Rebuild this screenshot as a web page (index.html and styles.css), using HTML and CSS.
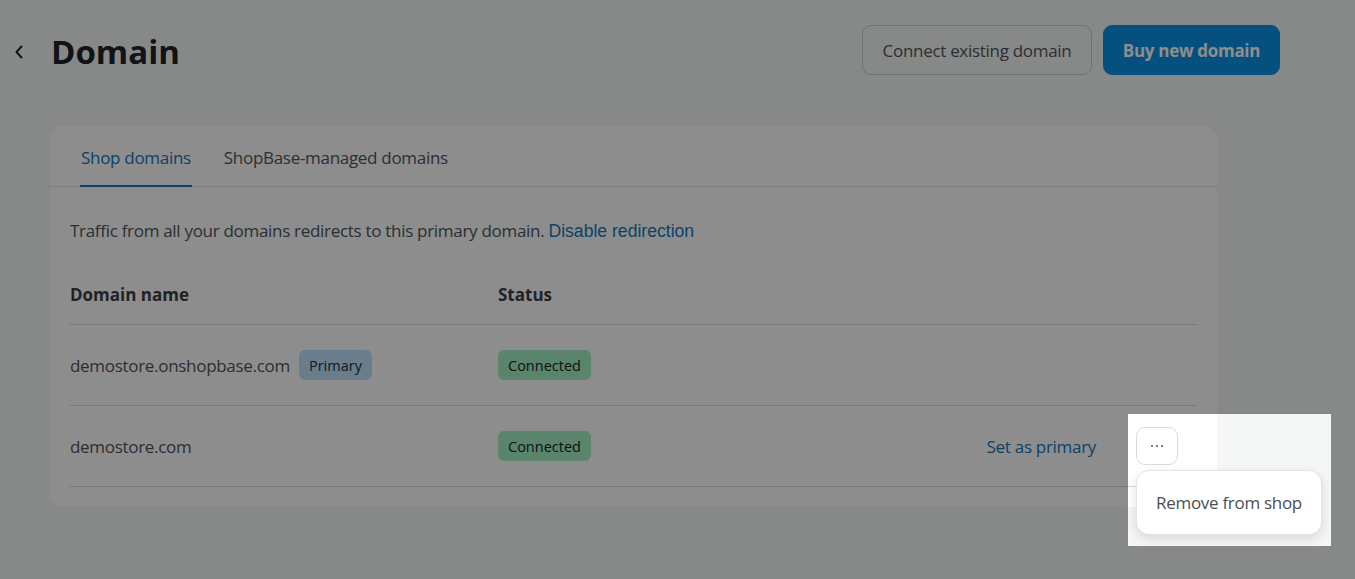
FILE: index.html
```html
<!DOCTYPE html>
<html lang="en">
<head>
<meta charset="utf-8">
<title>Domain</title>
<link rel="stylesheet" href="styles.css">
</head>
<body>
<div class="page">
  <header class="header">
    <div class="title-wrap">
      <span class="back">
        <svg width="10" height="14" viewBox="0 0 10 14"><path d="M7.5 1.5 L2.5 7 L7.5 12.5" fill="none" stroke="#23292f" stroke-width="2" stroke-linecap="round" stroke-linejoin="round"/></svg>
      </span>
      <h1 class="title">Domain</h1>
    </div>
    <div class="actions">
      <button class="btn btn-outline">Connect existing domain</button>
      <button class="btn btn-primary">Buy new domain</button>
    </div>
  </header>

  <section class="card">
    <nav class="tabs">
      <span class="tab active">Shop domains</span>
      <span class="tab">ShopBase-managed domains</span>
    </nav>
    <div class="card-body">
      <p class="note">Traffic from all your domains redirects to this primary domain. <a class="link-arial">Disable redirection</a></p>
      <div class="table">
        <div class="row head">
          <div class="col-name">Domain name</div>
          <div class="col-status">Status</div>
          <div class="col-actions"></div>
        </div>
        <div class="row">
          <div class="col-name">demostore.onshopbase.com <span class="badge badge-blue">Primary</span></div>
          <div class="col-status"><span class="badge badge-green">Connected</span></div>
          <div class="col-actions"></div>
        </div>
        <div class="row">
          <div class="col-name">demostore.com</div>
          <div class="col-status"><span class="badge badge-green">Connected</span></div>
          <div class="col-actions">
            <a class="link">Set as primary</a>
            <div class="more-wrap">
              <button class="more">
                <svg width="14" height="4" viewBox="0 0 14 4"><circle cx="2" cy="2" r="1" fill="#4a4f55"/><circle cx="7" cy="2" r="1" fill="#4a4f55"/><circle cx="12" cy="2" r="1" fill="#4a4f55"/></svg>
              </button>
              <div class="menu">Remove from shop</div>
            </div>
          </div>
        </div>
      </div>
    </div>
  </section>
</div>
<div class="spotlight"></div>
</body>
</html>
```

FILE: styles.css
```css
* { box-sizing: border-box; }
html, body { margin: 0; padding: 0; }
body {
  background: #f5f7f6;
  font-family: "Open Sans", "Noto Sans", sans-serif;
  color: #4f555b;
  width: 1355px;
  height: 579px;
  overflow: hidden;
  position: relative;
}
.page { padding: 25px 75px 0 0; }
.header {
  display: flex;
  align-items: center;
  justify-content: space-between;
  height: 50px;
}
.title-wrap { display: flex; align-items: center; padding-top: 3px; }
.back { width: 51px; display: flex; justify-content: flex-start; padding-left: 14px; }
.back svg { display: block; }
.title {
  margin: 0;
  font-size: 33px;
  font-weight: 700;
  color: #202529;
  letter-spacing: 0;
}
.actions { display: flex; gap: 11px; }
.btn {
  height: 50px;
  border-radius: 9px;
  font-family: inherit;
  font-size: 17px;
  padding: 0;
  cursor: pointer;
  letter-spacing: -0.3px;
}
.btn-outline {
  background: #f5f7f6;
  border: 1px solid #c9cdd1;
  color: #4f555b;
  width: 230px;
}
.btn-primary {
  background: #0a92e4;
  border: 1px solid #0a92e4;
  color: #fff;
  font-weight: 700;
  width: 177px;
}
.card {
  margin: 51px 0 0 50px;
  width: 1167px;
  background: #fff;
  border-radius: 13px;
  padding-bottom: 20px;
}
.tabs {
  display: flex;
  gap: 31px;
  padding: 0 30px;
  border-bottom: 1px solid #dde0e3;
  height: 61px;
}
.tab {
  font-size: 17px;
  line-height: 20px;
  padding: 22px 1px 0;
  color: #4f555b;
  letter-spacing: -0.3px;
}
.tab.active {
  color: #1478bc;
  border-bottom: 2px solid #1478bc;
  margin-bottom: -1px;
}
.card-body { padding: 0 20px; }
.note {
  margin: 33px 0 0;
  font-size: 17px;
  line-height: 22px;
  letter-spacing: -0.3px;
}
.link-arial {
  font-family: "Liberation Sans", Arial, sans-serif;
  color: #1478bc;
  letter-spacing: 0;
  font-size: 17.6px;
}
.table { margin-top: 41px; }
.row {
  display: flex;
  align-items: center;
  height: 81px;
  border-bottom: 1px solid #d6d9dc;
  font-size: 17px;
  letter-spacing: -0.3px;
}
.row.head {
  height: 42px;
  align-items: flex-start;
  font-weight: 700;
  color: #3a3f44;
  letter-spacing: 0;
}
.col-name { width: 428px; display: flex; align-items: center; gap: 9px; }
.col-status { width: 300px; }
.col-actions {
  flex: 1;
  display: flex;
  align-items: center;
  justify-content: flex-end;
  padding-right: 19px;
}
.badge {
  display: inline-flex;
  align-items: center;
  height: 30px;
  padding: 0 10px;
  border-radius: 6px;
  font-size: 14.5px;
  letter-spacing: 0;
}
.badge-blue { background: #bfe3fb; color: #1c2f45; }
.badge-green { background: #a5efc4; color: #14241c; }
.link { color: #1478bc; font-size: 17px; }
.more-wrap { position: relative; margin-left: 40px; }
.more {
  width: 42px;
  height: 38px;
  border: 1px solid #d9dcdf;
  border-radius: 9px;
  background: #fff;
  display: flex;
  align-items: center;
  justify-content: center;
  padding: 0;
}
.menu {
  position: absolute;
  left: 0;
  top: 43px;
  width: 186px;
  height: 65px;
  background: #fff;
  border: 1px solid #e2e4e6;
  border-radius: 13px;
  box-shadow: 0 4px 12px rgba(0,0,0,0.12);
  display: flex;
  align-items: center;
  justify-content: center;
  font-size: 17px;
  color: #4a4f55;
  letter-spacing: -0.3px;
  white-space: nowrap;
}
.spotlight {
  position: absolute;
  left: 1128px;
  top: 414px;
  width: 203px;
  height: 132px;
  box-shadow: 0 0 0 3000px rgba(0,0,0,0.447);
  pointer-events: none;
}
```
